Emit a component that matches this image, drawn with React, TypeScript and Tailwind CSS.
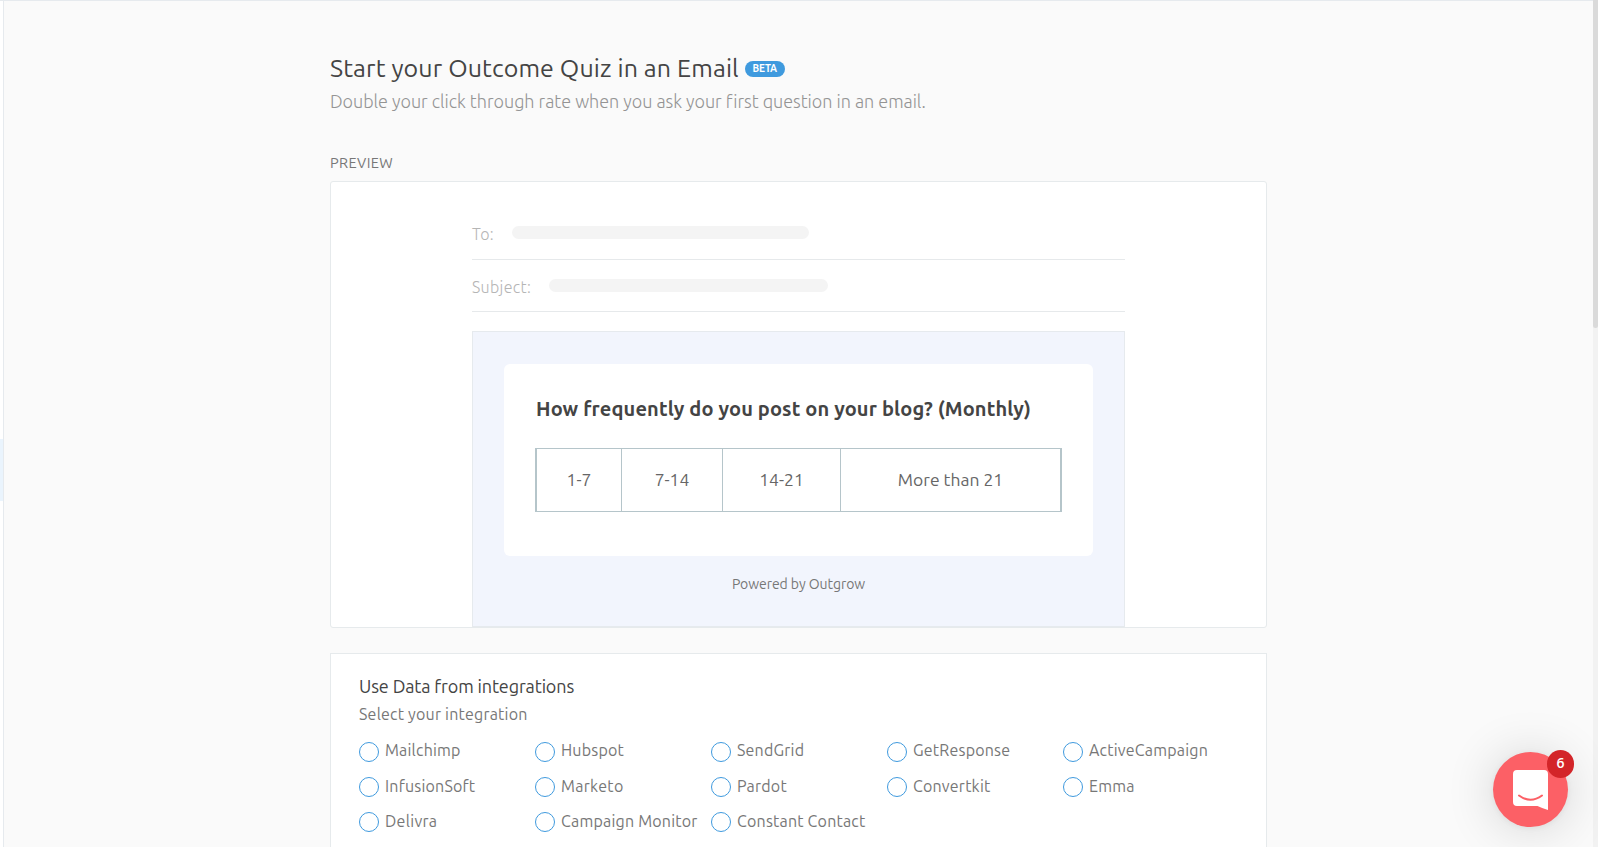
const integrations: { name: string; label: string }[] = [
  { name: "Mailchimp", label: "-mt-1 tracking-[0.2px]" },
  { name: "Hubspot", label: "-mt-1 tracking-[0.2px]" },
  { name: "SendGrid", label: "-mt-1 tracking-[0.2px]" },
  { name: "GetResponse", label: "-mt-1 tracking-[0.2px]" },
  { name: "ActiveCampaign", label: "-mt-1 tracking-[0.2px]" },
  { name: "InfusionSoft", label: "-mt-0.5 tracking-[0.2px]" },
  { name: "Marketo", label: "-mt-0.5 tracking-[0.3px]" },
  { name: "Pardot", label: "-mt-0.5 tracking-[0.2px]" },
  { name: "Convertkit", label: "-mt-0.5 tracking-[0.2px]" },
  { name: "Emma", label: "-mt-0.5 tracking-[0.2px]" },
  { name: "Delivra", label: "-mt-0.5 tracking-[0.3px]" },
  { name: "Campaign Monitor", label: "-mt-0.5 tracking-[0.2px]" },
  { name: "Constant Contact", label: "-mt-0.5 tracking-[0.2px]" },
];

function Header() {
  return (
    <header>
      <div className="flex h-8 items-center">
        <h1 className="text-[25px] leading-8 tracking-[0.12px] text-[#444]">
          Start your Outcome Quiz in an Email
        </h1>
        <span className="mt-0.5 ml-1.5 flex h-4 w-10 items-center justify-center rounded-full bg-[#3f9ade] text-[10px] leading-4 font-bold tracking-[-0.1px] text-white">
          BETA
        </span>
      </div>
      <p className="mt-[5px] text-lg leading-6 font-light tracking-[-0.02px] text-[#949494]">
        Double your click through rate when you ask your first question in an email.
      </p>
    </header>
  );
}

function EmailPreview() {
  return (
    <section className="mt-2 h-[447px] rounded-[3px] border border-[#e6eaec] bg-white px-[141px] pt-[31px]">
      <div className="flex h-[47px] items-start border-b border-[#e6e9eb] pt-[13px]">
        <span className="-mt-0.5 w-10 text-base leading-5 font-light tracking-[0.2px] text-[#b5b5b5]">To:</span>
        <div className="h-[13px] w-[297px] rounded-full bg-[#f4f4f4]" />
      </div>
      <div className="flex h-[52px] items-start border-b border-[#e6e9eb] pt-[19px]">
        <span className="-mt-0.5 w-[77px] text-base leading-5 font-light tracking-[0.35px] text-[#b5b5b5]">
          Subject:
        </span>
        <div className="h-[13px] w-[279px] rounded-full bg-[#f4f4f4]" />
      </div>
      <div className="mt-[19px] h-[296px] border border-[#e6eaee] bg-[#f2f5fd] px-[31px] pt-8">
        <div className="h-48 rounded-md bg-white pt-[31px] pl-[31px]">
          <h2 className="ml-px text-xl leading-7 font-bold tracking-[0.13px] text-[#444]">
            How frequently do you post on your blog? (Monthly)
          </h2>
          <div className="mt-[25px] grid h-16 w-[527px] grid-cols-[85px_101px_118px_1fr] divide-x divide-[#b5c5ca] border-x-2 border-y border-[#b5c5ca] text-center text-[17.5px] leading-[62px] text-[#666]">
            <span>1-7</span>
            <span>7-14</span>
            <span>14-21</span>
            <span>More than 21</span>
          </div>
        </div>
        <p className="mt-[18px] text-center text-sm leading-5 tracking-[-0.06px] text-[#777]">
          Powered by Outgrow
        </p>
      </div>
    </section>
  );
}

function Integrations() {
  return (
    <section className="mt-[25px] h-[240px] border border-[#e6eaec] bg-white px-7 pt-5">
      <h3 className="text-lg leading-6 tracking-[-0.13px] text-[#444]">Use Data from integrations</h3>
      <p className="mt-1 text-base leading-6 tracking-[0.21px] text-[#777]">Select your integration</p>
      <div className="mt-4 grid grid-cols-[repeat(5,176px)] gap-y-[15px]">
        {integrations.map(({ name, label }) => (
          <label key={name} className="flex h-5 items-center whitespace-nowrap">
            <span className="size-5 shrink-0 rounded-full border border-[#3f9ade]" />
            <span className={`ml-1.5 text-base leading-5 text-[#777] ${label}`}>{name}</span>
          </label>
        ))}
      </div>
    </section>
  );
}

function ChatLauncher() {
  return (
    <div className="absolute top-[752px] left-[1493px] size-[75px] rounded-full bg-[#fc6066] shadow-[0_2px_50px_rgba(0,0,0,0.16),0_1px_6px_rgba(0,0,0,0.06)]">
      <svg className="absolute top-[18px] left-5 h-10 w-[35px]" viewBox="0 0 35 40" fill="none">
        <path d="M4 0H31Q35 0 35 4V40Q29 38.200 24.500 36H4Q0 36 0 32V4Q0 0 4 0Z" fill="#fff" />
        <path d="M6 25.500Q17.500 34 29 25.500" stroke="#fc6066" strokeWidth="2" strokeLinecap="round" />
      </svg>
      <span className="absolute -top-0.5 left-[54px] flex h-7 w-[27px] items-center justify-center rounded-full bg-[#d32529] pb-0.5 font-['Open_Sans','Noto_Sans',sans-serif] text-sm leading-7 font-semibold text-white">
        6
      </span>
    </div>
  );
}

export default function App() {
  return (
    <div className="relative flex h-[847px] w-full overflow-hidden bg-[#fafafa] font-[Ubuntu,'Noto_Sans',sans-serif]">
      <aside className="flex w-1 shrink-0 flex-col border-t border-r border-[#e6eaee] bg-white pt-[438px]">
        <div className="h-[62px] bg-[#eaf4fd]" />
      </aside>
      <main className="flex-1 border-t border-[#e6eaee] pt-[51px] pl-[326px]">
        <div className="w-[937px]">
          <Header />
          <h4 className="mt-10 text-[14.5px] leading-5 tracking-[0.4px] text-[#777]">PREVIEW</h4>
          <EmailPreview />
          <Integrations />
        </div>
      </main>
      <div className="w-[5px] shrink-0 bg-[#f2f2f2]">
        <div className="h-[328px] rounded-b-sm bg-[#dadada]" />
      </div>
      <ChatLauncher />
    </div>
  );
}
